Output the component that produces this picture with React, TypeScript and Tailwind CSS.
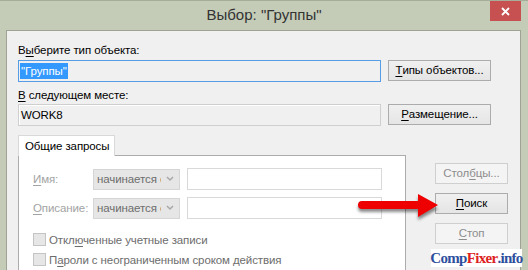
import type { ReactNode } from "react";

const ui = "font-['Segoe_UI','Liberation_Sans',sans-serif]";

function U({ children }: { children: ReactNode }) {
  return <span className="underline decoration-1 underline-offset-[2px]">{children}</span>;
}

function Btn({
  children,
  disabled,
  className = "",
}: {
  children: ReactNode;
  disabled?: boolean;
  className?: string;
}) {
  return (
    <div
      className={`flex items-center justify-center h-[21px] border leading-none ${
        disabled
          ? "border-[#cfcfcf] bg-[#f4f4f4] text-[#8d8d8d]"
          : "border-[#acacac] bg-linear-to-b from-[#f0f0f0] to-[#e5e5e5] text-black"
      } ${className}`}
    >
      {children}
    </div>
  );
}

function Combo() {
  return (
    <div className="flex items-center w-[87px] h-[21px] border border-[#d5d5d5] bg-[#e6e6e6]">
      <div className="w-[67px] overflow-hidden whitespace-nowrap pl-[3px] text-[#6d6d6d]">
        начинается с
      </div>
      <svg width="18" height="10" viewBox="0 0 18 10" className="ml-auto">
        <path d="M6 3 L9 6 L12 3" stroke="#a8a8a8" strokeWidth="1.5" fill="none" />
      </svg>
    </div>
  );
}

function Row({ label, className = "" }: { label: ReactNode; className?: string }) {
  return (
    <div className={`flex items-center h-[22px] ${className}`}>
      <div className="w-[60px] text-[#a3a3a3] whitespace-nowrap">{label}</div>
      <Combo />
      <div className="ml-[7px] w-[195px] h-[22px] border border-[#d9d9d9] bg-white" />
    </div>
  );
}

function Check({ children, className = "" }: { children: ReactNode; className?: string }) {
  return (
    <div className={`flex items-center h-[13px] ${className}`}>
      <div className="w-[13px] h-[13px] border border-[#c4c4c4] bg-[#e6e6e6]" />
      <span className="ml-[3px] whitespace-nowrap text-[#6d6d6d]">{children}</span>
    </div>
  );
}

export default function App() {
  return (
    <div
      className={`relative w-[528px] h-[270px] overflow-hidden bg-[#c4cbb7] flex flex-col border-t border-[#a6ad99] text-[11.5px] tracking-[-0.1px] leading-[16px] text-black ${ui}`}
    >
      {/* Title bar */}
      <div className="relative h-[29px] shrink-0 flex items-center justify-center">
        <span className="text-[15px] tracking-normal leading-none text-[#333] pb-[2px]">Выбор: "Группы"</span>
        <div className="absolute top-0 right-[7px] w-[31px] h-[20px] bg-[#c75050] flex items-center justify-center">
          <svg width="9" height="9" viewBox="0 0 9 9">
            <path d="M1 1 L8 8 M8 1 L1 8" stroke="white" strokeWidth="1.8" />
          </svg>
        </div>
      </div>

      {/* Client area */}
      <div className="ml-[6px] mr-[7px] flex-1 border border-[#9ea394] bg-[#f0f0f0] pl-[11px] pt-[11px]">
        <div className="flex gap-[7px]">
          <div className="w-[363px] flex flex-col">
            <div className="h-[16px]">
              В<U>ы</U>берите тип объекта:
            </div>
            <div className="mt-[2px] h-[22px] border border-[#569de5] bg-[#f0f0f0] flex items-center pl-[1px]">
              <span className="bg-[#3399ff] text-white px-[1px]">"Группы"</span>
            </div>
            <div className="mt-[5px] h-[16px]">
              <U>В</U> следующем месте:
            </div>
            <div className="mt-[1px] h-[22px] border border-[#cfcfcf] bg-[#f0f0f0] shadow-[inset_1px_1px_0_#ffffff] flex items-center pl-[2px]">
              WORK8
            </div>
          </div>
          <div className="w-[103px] flex flex-col">
            <Btn className="mt-[18px]">
              <U>Т</U>ипы объектов...
            </Btn>
            <Btn className="mt-[23px]">
              <U>Р</U>азмещение...
            </Btn>
          </div>
        </div>

        <div className="mt-[9px] flex">
          <div className="w-[388px] flex flex-col">
            <div className="flex">
              <div className="relative z-10 -mb-px w-[97px] h-[21px] border border-b-0 border-[#d9d9d9] bg-white pl-[6px] pt-[2px] whitespace-nowrap">
                Общие запросы
              </div>
            </div>
            <div className="h-[200px] border border-[#acacac] bg-white pl-[14px] pt-[12px]">
              <Row
                label={
                  <>
                    <U>И</U>мя:
                  </>
                }
              />
              <Row
                className="mt-[7px]"
                label={
                  <>
                    <U>О</U>писание:
                  </>
                }
              />
              <Check className="mt-[14px]">
                Откл<U>ю</U>ченные учетные записи
              </Check>
              <Check className="mt-[7px]">
                П<U>а</U>роли с неограниченным сроком действия
              </Check>
            </div>
          </div>
          <div className="ml-[29px] w-[73px] flex flex-col gap-[9px] pt-[28px]">
            <Btn disabled>
              Стол<U>б</U>цы...
            </Btn>
            <Btn>
              <U>П</U>оиск
            </Btn>
            <Btn disabled>
              <U>С</U>топ
            </Btn>
          </div>
        </div>
      </div>

      {/* Red arrow annotation */}
      <svg className="absolute left-[350px] top-[186px]" width="100" height="40" viewBox="350 186 100 40">
        <defs>
          <filter id="sh" x="-20%" y="-40%" width="140%" height="180%">
            <feGaussianBlur stdDeviation="1.6" />
          </filter>
        </defs>
        <path
          d="M362 203 L418 203 L418 196 L438 208 L418 219 L418 211 L362 211 A4 4 0 0 1 362 203 Z"
          fill="rgba(0,0,0,0.45)"
          filter="url(#sh)"
        />
        <path
          d="M362 200 L418 200 L418 193 L438 204 L418 216 L418 208 L362 208 A4 4 0 0 1 362 200 Z"
          fill="#ee0000"
        />
      </svg>

      {/* Watermark */}
      <div className="absolute left-[431px] top-[248px] w-[91px] h-[18px] bg-white flex items-center justify-center font-['Liberation_Serif',serif] font-bold text-[15px] leading-none tracking-[-0.7px]">
        <span className="text-[#2e4f9e]">Comp</span>
        <span className="text-[#dd2222]">Fixer</span>
        <span className="text-[#2e4f9e]">.info</span>
      </div>
    </div>
  );
}
